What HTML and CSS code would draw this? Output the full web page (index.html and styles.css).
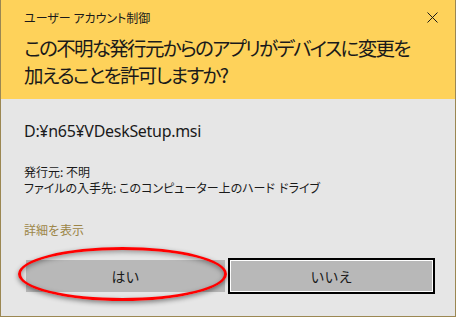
FILE: index.html
```html
<!DOCTYPE html>
<html lang="ja">
  <head>
    <meta charset="UTF-8" />
    <title>ユーザー アカウント制御</title>
    <link rel="stylesheet" href="styles.css">
  </head>
  <body>
    <div class="dialog">
      <div class="header">
        <div class="title-row">
          <span class="title">ユーザー アカウント制御</span>
          <svg class="close" width="11" height="11" viewBox="0 0 11 11">
            <path d="M0.5 0.5 L10.5 10.5 M10.5 0.5 L0.5 10.5" stroke="#1a1a1a" stroke-width="1" fill="none" />
          </svg>
        </div>
        <h1 class="question">この不明な発行元からのアプリがデバイスに変更を<br>加えることを許可しますか?</h1>
      </div>
      <div class="content">
        <div class="file">D:¥n65¥VDeskSetup.msi</div>
        <div class="info">
          <div>発行元: 不明</div>
          <div>ファイルの入手先: このコンピューター上のハード&#8196;ドライブ</div>
        </div>
        <a class="details" href="javascript:;">詳細を表示</a>
        <div class="buttons">
          <div class="btn btn-yes">はい</div>
          <div class="btn btn-no">いいえ</div>
          <div class="mark"></div>
        </div>
      </div>
    </div>
  </body>
</html>
```

FILE: styles.css
```css
* {
  margin: 0;
  padding: 0;
  box-sizing: border-box;
}
body {
  font-family: "Noto Sans CJK JP", "Noto Sans", sans-serif;
  color: #1a1a1a;
  background: #e6e6e6;
}
.dialog {
  width: 456px;
  height: 317px;
  border: 1px solid #9b8752;
  border-top: none;
  display: flex;
  flex-direction: column;
  background: #e6e6e6;
}
.header {
  background: #fed25a;
  height: 99px;
  flex-shrink: 0;
  padding: 7px 16px 0 23px;
}
.title-row {
  display: flex;
  justify-content: space-between;
  align-items: center;
  height: 20px;
}
.title {
  font-size: 12px;
  font-feature-settings: "palt";
}
.close {
  margin-right: 1px;
}
.question {
  font-weight: normal;
  font-size: 19.5px;
  line-height: 27px;
  margin-top: 7px;
  white-space: nowrap;
  font-feature-settings: "palt";
  letter-spacing: -1.7px;
}
.content {
  flex: 1;
  padding: 21px 0 0 23px;
  position: relative;
}
.file {
  font-family: "Noto Sans", sans-serif;
  font-size: 16px;
  line-height: 22px;
  letter-spacing: -0.3px;
}
.info {
  margin-top: 22px;
  font-size: 12px;
  line-height: 16px;
  font-feature-settings: "palt";
}
.details {
  display: block;
  margin-top: 26px;
  font-size: 12px;
  line-height: 16px;
  color: #9c8547;
  text-decoration: none;
}
.buttons {
  display: flex;
  gap: 1px;
  margin-top: 20px;
  position: relative;
}
.btn {
  width: 203px;
  height: 36px;
  display: flex;
  align-items: center;
  justify-content: center;
  font-size: 14px;
  background: #b8b8b8;
  border: 2px solid #e6e6e6;
}
.btn-no {
  width: 207px;
  border: 2px solid #000;
  box-shadow: inset 0 0 0 1px #fff;
}
.mark {
  position: absolute;
  left: -6px;
  top: -11px;
  width: 209px;
  height: 54px;
  border: 3px solid #ff0000;
  border-radius: 50%;
  box-shadow: 0 2px 5px rgba(0, 0, 0, 0.45), inset 0 2px 5px rgba(0, 0, 0, 0.35);
}
```
